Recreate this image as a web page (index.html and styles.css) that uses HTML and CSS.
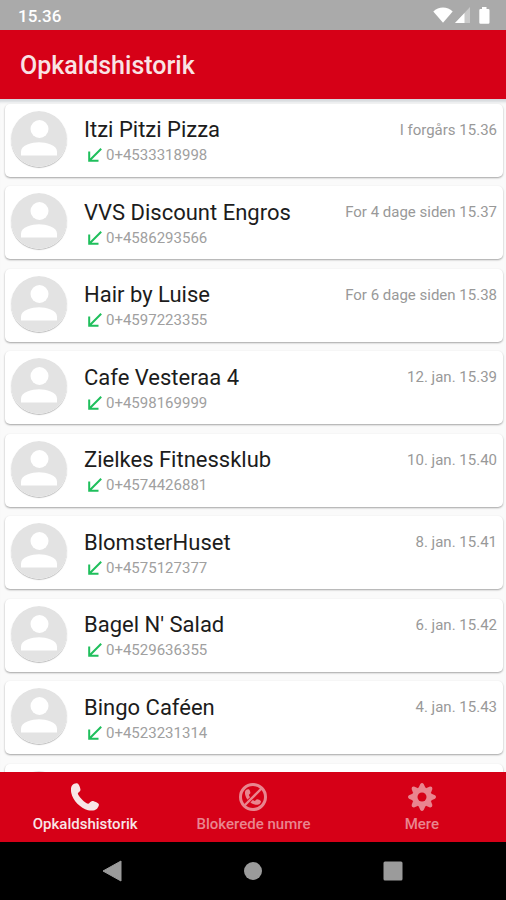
FILE: index.html
```html
<!DOCTYPE html>
<html lang="da">
<head>
	<meta charset="UTF-8">
	<title>Opkaldshistorik</title>
	<link rel="stylesheet" href="styles.css">
</head>
<body>
	<svg class="symbols" width="0" height="0">
		<symbol id="person" viewBox="0 0 56 56">
			<circle cx="28" cy="28" r="28" fill="#e3e3e3"/>
			<circle cx="28.500" cy="18" r="9" fill="#fff"/>
			<path d="M10 44.500v-4c0-6.500 11-9.300 18-9.300s18 2.800 18 9.300v4z" fill="#fff"/>
		</symbol>
		<symbol id="incoming" viewBox="0 0 14 14">
			<path d="M13.200 .8L1.500 12.500M1.200 3.500v9.300h9.300" fill="none" stroke="#1fbf5c" stroke-width="2"/>
		</symbol>
		<symbol id="phone" viewBox="0 0 28 28">
			<path d="M1 2.500C2.500.7 5 0 6.500.5c1.500.5 3 4.500 3 6.500 0 1.500-2.700 2.500-2.700 3.500 0 2.300 7.800 10.300 10.500 10.300 1.200 0 2.200-2.700 4-2.700 1.700 0 5.700 1.900 6.400 2.900.7 1.200-.5 3.500-1.700 4.700-2 2-5.500 2.300-9 1.500C9.500 25.200 1.700 17.500.3 10 -.3 7-.3 4.200 1 2.500z"/>
		</symbol>
	</svg>
	<div class="statusbar">
		<span>15.36</span>
		<div class="status-icons">
			<svg class="wifi" width="20" height="16" viewBox="0 0 20 16"><path d="M.3 4.500C5.500-.8 14.500-.8 19.700 4.500L10 15.700z" fill="#fff"/></svg>
			<svg class="signal" width="16" height="16" viewBox="0 0 16 16"><path d="M15 0v16H0z" fill="#c9c9c9"/><path d="M9.500 6v10H0z" fill="#fff"/></svg>
			<svg width="11" height="17" viewBox="0 0 11 17"><path d="M3 0h4.500v2H9.300q1.200 0 1.200 1.200V15.500q0 1.300-1.200 1.300H1.500Q.3 16.800.3 15.500V3.200Q.3 2 1.500 2H3z" fill="#fff"/></svg>
		</div>
	</div>
	<header class="header">
		<h1>Opkaldshistorik</h1>
	</header>
	<div class="list">
		<div class="card">
			<svg class="avatar"><use href="#person"/></svg>
			<div class="info">
				<div class="name">Itzi Pitzi Pizza</div>
				<div class="number"><svg class="arrow"><use href="#incoming"/></svg>0+4533318998</div>
			</div>
			<div class="date">I forgårs 15.36</div>
		</div>
		<div class="card">
			<svg class="avatar"><use href="#person"/></svg>
			<div class="info">
				<div class="name">VVS Discount Engros</div>
				<div class="number"><svg class="arrow"><use href="#incoming"/></svg>0+4586293566</div>
			</div>
			<div class="date">For 4 dage siden 15.37</div>
		</div>
		<div class="card">
			<svg class="avatar"><use href="#person"/></svg>
			<div class="info">
				<div class="name">Hair by Luise</div>
				<div class="number"><svg class="arrow"><use href="#incoming"/></svg>0+4597223355</div>
			</div>
			<div class="date">For 6 dage siden 15.38</div>
		</div>
		<div class="card">
			<svg class="avatar"><use href="#person"/></svg>
			<div class="info">
				<div class="name">Cafe Vesteraa 4</div>
				<div class="number"><svg class="arrow"><use href="#incoming"/></svg>0+4598169999</div>
			</div>
			<div class="date">12. jan. 15.39</div>
		</div>
		<div class="card">
			<svg class="avatar"><use href="#person"/></svg>
			<div class="info">
				<div class="name">Zielkes Fitnessklub</div>
				<div class="number"><svg class="arrow"><use href="#incoming"/></svg>0+4574426881</div>
			</div>
			<div class="date">10. jan. 15.40</div>
		</div>
		<div class="card">
			<svg class="avatar"><use href="#person"/></svg>
			<div class="info">
				<div class="name">BlomsterHuset</div>
				<div class="number"><svg class="arrow"><use href="#incoming"/></svg>0+4575127377</div>
			</div>
			<div class="date">8. jan. 15.41</div>
		</div>
		<div class="card">
			<svg class="avatar"><use href="#person"/></svg>
			<div class="info">
				<div class="name">Bagel N' Salad</div>
				<div class="number"><svg class="arrow"><use href="#incoming"/></svg>0+4529636355</div>
			</div>
			<div class="date">6. jan. 15.42</div>
		</div>
		<div class="card">
			<svg class="avatar"><use href="#person"/></svg>
			<div class="info">
				<div class="name">Bingo Caféen</div>
				<div class="number"><svg class="arrow"><use href="#incoming"/></svg>0+4523231314</div>
			</div>
			<div class="date">4. jan. 15.43</div>
		</div>
		<div class="card">
			<svg class="avatar"><use href="#person"/></svg>
		</div>
	</div>
	<nav class="tabs">
		<div class="tab active">
			<svg width="28" height="28"><use href="#phone"/></svg>
			<span>Opkaldshistorik</span>
		</div>
		<div class="tab">
			<svg width="28" height="28" viewBox="0 0 28 28">
				<use href="#phone" x="6" y="6" width="16" height="16"/>
				<path d="M5.500 22.500l17-17" stroke="#d60017" stroke-width="4"/>
				<circle cx="14" cy="14" r="12.500" fill="none" stroke="currentColor" stroke-width="3"/>
				<path d="M5.200 22.800L22.800 5.200" stroke="currentColor" stroke-width="2.300"/>
			</svg>
			<span>Blokerede numre</span>
		</div>
		<div class="tab">
			<svg width="28" height="28" viewBox="-14 -14 28 28">
				<g id="teeth">
					<path id="tooth" d="M-3.500-9L-1.700-13Q0-15 1.700-13L3.500-9z"/>
					<use href="#tooth" transform="rotate(90)"/>
					<use href="#tooth" transform="rotate(180)"/>
					<use href="#tooth" transform="rotate(270)"/>
				</g>
				<use href="#teeth" transform="rotate(45)"/>
				<circle r="10"/>
				<circle r="4.500" fill="#d60017"/>
			</svg>
			<span>Mere</span>
		</div>
	</nav>
	<div class="navbar">
		<svg width="20" height="22" viewBox="0 0 20 22"><path d="M19 1v20L1 11z" stroke-linejoin="round" stroke-width="1" stroke="#9b9b9b"/></svg>
		<svg width="18" height="18"><circle cx="9" cy="9" r="9"/></svg>
		<svg width="20" height="20"><rect x=".5" y=".5" width="19" height="19" rx="1.500"/></svg>
	</div>
</body>
</html>
```
FILE: styles.css
```css
*{
	margin: 0;
	padding: 0;
	box-sizing: border-box;
}
body{
	width: 506px;
	height: 900px;
	display: flex;
	flex-direction: column;
	overflow: hidden;
	background-color: #fafafa;
	font-family: Roboto, sans-serif;
}
.symbols{
	position: absolute;
}
.statusbar{
	height: 30px;
	flex: none;
	display: flex;
	justify-content: space-between;
	padding: 0 16px 0 18px;
	background-color: #aaa;
	color: #fff;
	font-size: 17px;
	font-weight: 500;
	line-height: 32px;
}
.status-icons{
	display: flex;
	align-items: center;
}
.wifi{
	margin-right: 2px;
}
.signal{
	margin-right: 8px;
}
.header{
	height: 69px;
	flex: none;
	padding-left: 20px;
	background-color: #d60017;
}
.header h1{
	color: #f9e3e5;
	font-size: 25px;
	font-weight: 500;
	line-height: 71px;
}
.list{
	flex: 1;
	min-height: 0;
	overflow: hidden;
	display: flex;
	flex-direction: column;
	gap: 9.5px;
	padding: 4.5px 3px 0 5px;
	box-shadow: inset 0 5px 3px -2px #d4d8dc;
}
.card{
	height: 73px;
	flex: none;
	display: flex;
	padding: 7px 6px 0;
	border-radius: 5px;
	background-color: #fff;
	box-shadow: 0 1px 2px rgba(0,0,0,.35);
}
.avatar{
	width: 56px;
	height: 56px;
	border-radius: 50%;
	box-shadow: 0 1px 1px #bbb;
}
.info{
	flex: 1;
	padding-left: 17px;
}
.name{
	color: #1c1c1c;
	font-size: 22px;
	line-height: 26px;
	margin-top: 6.9px;
}
.number{
	display: flex;
	align-items: center;
	color: #a0a0a0;
	font-size: 15px;
	line-height: 24px;
}
.arrow{
	width: 14px;
	height: 14px;
	margin: 0 4px 0 4px;
}
.date{
	color: #999;
	font-size: 15px;
	line-height: 18px;
	margin-top: 10.4px;
}
.tabs{
	height: 70px;
	flex: none;
	display: grid;
	grid-template-columns: repeat(3, 1fr);
	padding-left: 1px;
	background-color: #d60017;
}
.tab{
	display: flex;
	flex-direction: column;
	align-items: center;
	padding-top: 11px;
	color: #e9858f;
	font-size: 15px;
	font-weight: 500;
	line-height: 26px;
}
.tab svg{
	fill: currentColor;
}
.tab.active{
	color: #f8e6e7;
}
.navbar{
	height: 58px;
	flex: none;
	display: flex;
	align-items: center;
	justify-content: space-between;
	padding: 0 103px 0 102px;
	background-color: #000;
}
.navbar svg{
	fill: #9b9b9b;
}
```
